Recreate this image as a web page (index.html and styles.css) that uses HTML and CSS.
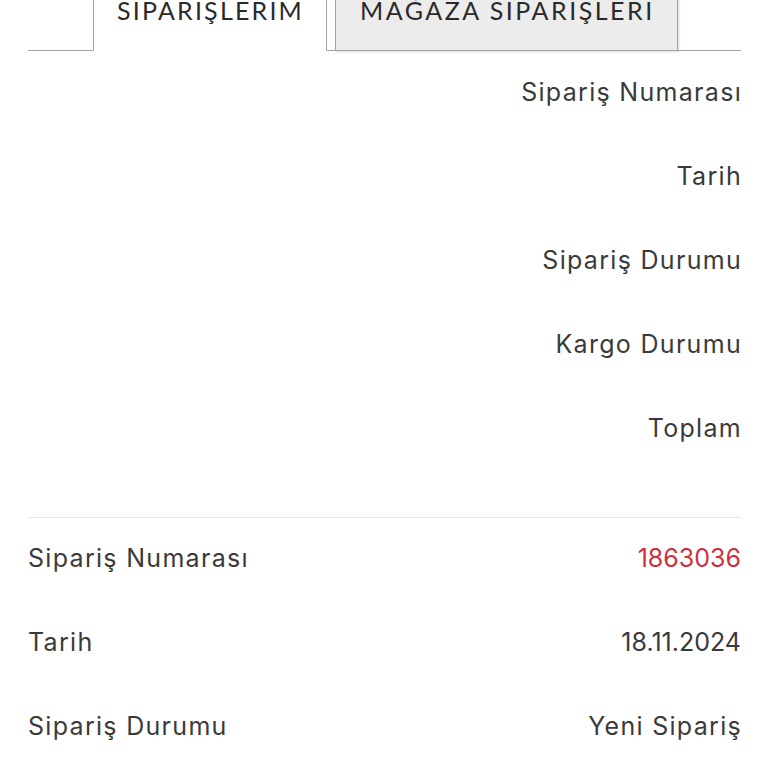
FILE: index.html
```html
<!DOCTYPE html>
<html lang="tr">
<head>
    <meta charset="UTF-8">
    <meta name="viewport" content="width=device-width, initial-scale=1.0">
    <title>Siparişlerim</title>
    <link rel="stylesheet" href="styles.css">
</head>
<body>
    <div class="page">
        <ul class="tabs">
            <li class="tab active">SİPARİŞLERİM</li>
            <li class="tab">MAĞAZA SİPARİŞLERİ</li>
        </ul>

        <!-- tablo basliklari (mobilde alt alta) -->
        <div class="order-head">
            <div class="head-cell">Sipariş Numarası</div>
            <div class="head-cell">Tarih</div>
            <div class="head-cell">Sipariş Durumu</div>
            <div class="head-cell">Kargo Durumu</div>
            <div class="head-cell">Toplam</div>
        </div>

        <div class="order">
            <div class="order-line">
                <span class="label">Sipariş Numarası</span>
                <span class="value num order-no">1863036</span>
            </div>
            <div class="order-line">
                <span class="label">Tarih</span>
                <span class="value num">18.11.2024</span>
            </div>
            <div class="order-line">
                <span class="label">Sipariş Durumu</span>
                <span class="value">Yeni Sipariş</span>
            </div>
        </div>
    </div>
</body>
</html>
```

FILE: styles.css
```css
:root {
    --text: #3a3a3a;
    --red: #cf2f3c;
    --tab-border: #a2a2a2;
    --tab-bg: #ececec;
    --line: #e6e6e6;
}

body {
    margin: 0;
    background: #fff;
    color: var(--text);
    font-family: 'Inter', 'Open Sans', sans-serif;
}

.page {
    padding: 0 27px 0 28px;
}

.tabs {
    display: flex;
    align-items: flex-end;
    list-style: none;
    margin: -6px 0 0;
    padding: 0 0 0 65px;
    border-bottom: 1px solid var(--tab-border);
}

.tab {
    font-family: 'Lato', sans-serif;
    font-size: 25px;
    line-height: 30px;
    letter-spacing: 2.5px;
    color: #2a2a2a;
    padding: 0 22px 25px 24px;
    margin-bottom: -1px;
    border: 1px solid var(--tab-border);
    background: var(--tab-bg);
    box-shadow: 1px 1px 2px rgba(0, 0, 0, 0.15);
}

.tab.active {
    padding: 0 22px 25px 23px;
    letter-spacing: 2.2px;
    background: #fff;
    border-top: none;
    border-bottom: 1px solid #fff;
    box-shadow: none;
}

.tab + .tab {
    margin-left: 8px;
}

.order-head {
    padding: 1px 0 45px;
    border-bottom: 1px solid var(--line);
}

.head-cell,
.order-line {
    font-size: 25px;
    line-height: 80px;
    padding-bottom: 4px;
    letter-spacing: 1.3px;
}

.head-cell {
    text-align: right;
    margin-right: -1px;
}

.order-line {
    display: flex;
    justify-content: space-between;
}

.value {
    margin-right: -1px;
}

.num {
    letter-spacing: 0;
    margin-right: 0;
}

.order-no {
    color: var(--red);
}
```
